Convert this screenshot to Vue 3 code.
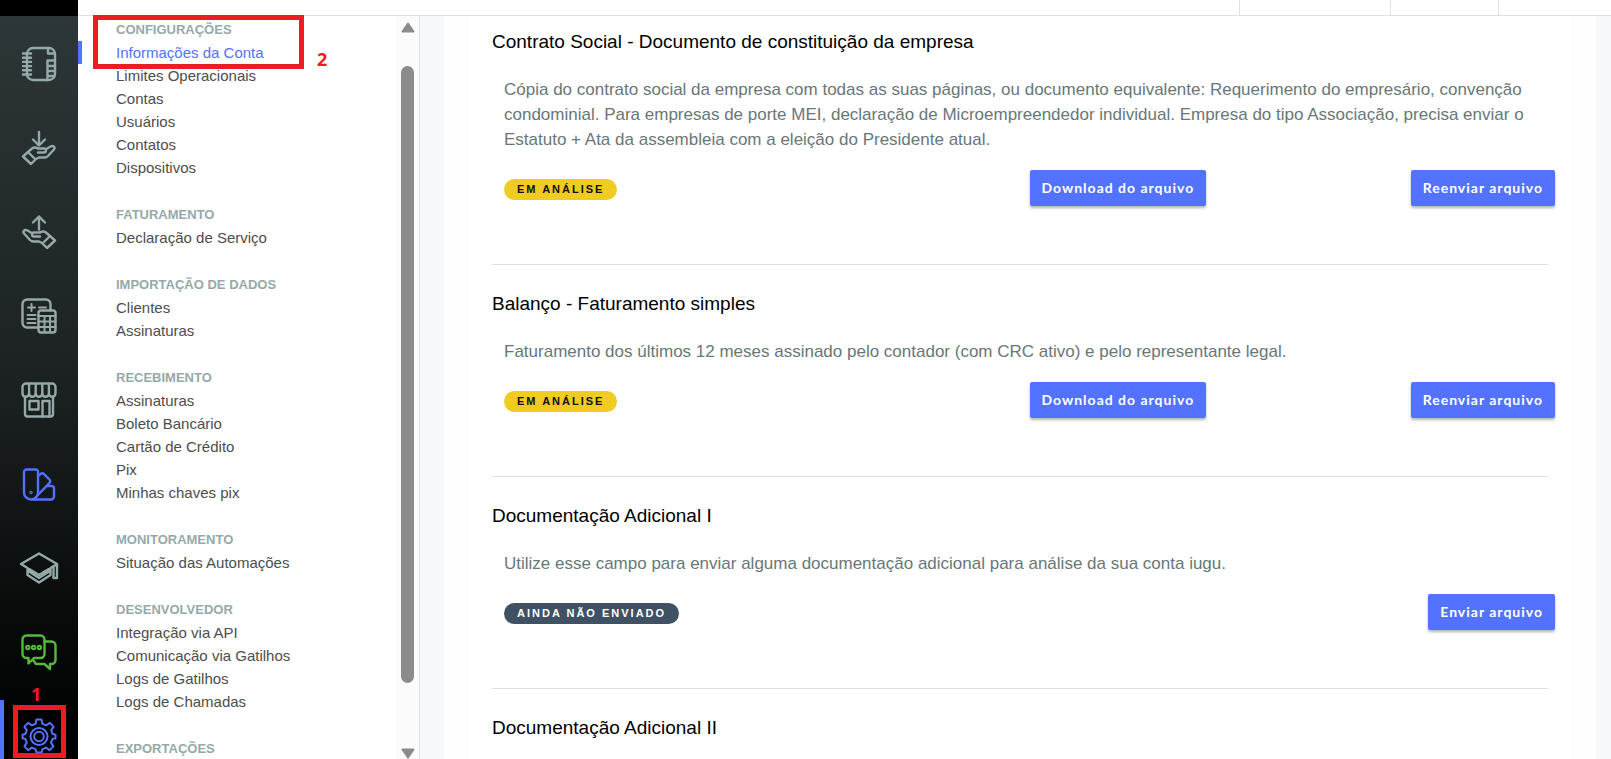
<script setup>
const groups = [
  {
    title: 'CONFIGURAÇÕES',
    items: ['Informações da Conta', 'Limites Operacionais', 'Contas', 'Usuários', 'Contatos', 'Dispositivos'],
  },
  { title: 'FATURAMENTO', items: ['Declaração de Serviço'] },
  { title: 'IMPORTAÇÃO DE DADOS', items: ['Clientes', 'Assinaturas'] },
  {
    title: 'RECEBIMENTO',
    items: ['Assinaturas', 'Boleto Bancário', 'Cartão de Crédito', 'Pix', 'Minhas chaves pix'],
  },
  { title: 'MONITORAMENTO', items: ['Situação das Automações'] },
  {
    title: 'DESENVOLVEDOR',
    items: ['Integração via API', 'Comunicação via Gatilhos', 'Logs de Gatilhos', 'Logs de Chamadas'],
  },
  { title: 'EXPORTAÇÕES', items: [] },
]

const documents = [
  {
    title: 'Contrato Social - Documento de constituição da empresa',
    text: 'Cópia do contrato social da empresa com todas as suas páginas, ou documento equivalente: Requerimento do empresário, convenção condominial. Para empresas de porte MEI, declaração de Microempreendedor individual. Empresa do tipo Associação, precisa enviar o Estatuto + Ata da assembleia com a eleição do Presidente atual.',
    status: 'EM ANÁLISE',
    tone: 'review',
    actions: ['Download do arquivo', 'Reenviar arquivo'],
  },
  {
    title: 'Balanço - Faturamento simples',
    text: 'Faturamento dos últimos 12 meses assinado pelo contador (com CRC ativo) e pelo representante legal.',
    status: 'EM ANÁLISE',
    tone: 'review',
    actions: ['Download do arquivo', 'Reenviar arquivo'],
  },
  {
    title: 'Documentação Adicional I',
    text: 'Utilize esse campo para enviar alguma documentação adicional para análise da sua conta iugu.',
    status: 'AINDA NÃO ENVIADO',
    tone: 'missing',
    actions: ['Enviar arquivo'],
  },
  { title: 'Documentação Adicional II' },
]
</script>

<template>
  <div class="app">
    <aside class="rail">
      <div class="rail-top"></div>
      <nav class="rail-nav" aria-label="Principal">
        <a href="#" class="rail-link" aria-label="Cadastros">
          <svg viewBox="0 0 36 36">
            <rect x="6" y="2" width="28" height="32" rx="6" />
            <path d="M27 2v5.500h6.500M26.500 34V14.500h7.500M26.500 20h7.500M26.500 25h7.500M26.500 30h6.500" />
            <path d="M2 7.500h8M2 11.700h8M2 15.900h8M2 20.100h8M2 24.300h8M2 28.500h8" />
          </svg>
        </a>
        <a href="#" class="rail-link" aria-label="Receber">
          <svg viewBox="0 0 36 36">
            <path d="M18 2v13M12 9.500l6 6 6-6" />
            <path d="M2 26.500l5-4.500 7.500 7.500-4.500 4.500zM7 22l4-3.500c2-1.400 4-1.300 6 0h6c2.600 0 2.600 4 0 4h-6M24.500 19.500l5-3c3-1.500 5 .7 3.400 3L27 26c-1 1-2 1.500-3.500 1.500H18l-4 2" />
          </svg>
        </a>
        <a href="#" class="rail-link" aria-label="Pagar">
          <svg viewBox="0 0 36 36">
            <path d="M18 15.500v-13M12 8.500l6-6 6 6" />
            <path d="M34 26.500l-5-4.500-7.500 7.500 4.500 4.500zM29 22l-4-3.500c-2-1.400-4-1.300-6 0h-6c-2.600 0-2.600 4 0 4h6M11.500 19.500l-5-3c-3-1.500-5 .7-3.400 3L9 26c1 1 2 1.500 3.500 1.500H18l4 2" />
          </svg>
        </a>
        <a href="#" class="rail-link" aria-label="Financeiro">
          <svg viewBox="0 0 36 36">
            <path d="M17 29.500H6a4.500 4.500 0 0 1-4.500-4.500V6A4.500 4.500 0 0 1 6 1.500h19A4.500 4.500 0 0 1 29.500 6v6" />
            <path d="M7 9.500h7M10.500 6v7M18 9.500h7M6.500 17h8M6.500 21h8M6.500 25h8" stroke-width="2" />
            <rect x="17.500" y="12.500" width="17" height="22" rx="2.500" />
            <path d="M17.500 18h17M17.500 23.500h17M17.500 29h17M23.500 18v16M29 18v16" stroke-width="2" />
          </svg>
        </a>
        <a href="#" class="rail-link" aria-label="Marketplace">
          <svg viewBox="0 0 36 36">
            <path d="M1.500 11V5A3.500 3.500 0 0 1 5 1.500h26A3.500 3.500 0 0 1 34.500 5v6c0 5-6.600 5-6.600 0 0 5-6.600 5-6.600 0 0 5-6.600 5-6.600 0 0 5-6.600 5-6.600 0 0 5-6.600 5-6.600 0zM8.100 11V2M14.700 11V2M21.300 11V2M27.900 11V2" />
            <path d="M4 15v17a2.500 2.500 0 0 0 2.500 2.500h23A2.500 2.500 0 0 0 32 32V15" />
            <rect x="8.500" y="19" width="9" height="8.500" />
            <path d="M21.500 34.500V19H28.500v15.500" />
          </svg>
        </a>
        <a href="#" class="rail-link blue" aria-label="Personalização">
          <svg viewBox="0 0 36 36">
            <path d="M3 6a2.500 2.500 0 0 1 2.500-2.500h9A2.500 2.500 0 0 1 17 6v20.500a7 7 0 0 1-14 0zM17 10.500l2.500-2.500c1.200-1 2.500-1 3.500.2l5.500 5.500c1 1.200 1 2.500-.2 3.500L14.500 31.500M27 20h3.500a2.500 2.500 0 0 1 2.500 2.500v8a3 3 0 0 1-3 3H10" />
            <circle class="solid" cx="10" cy="26.500" r="0.500" />
          </svg>
        </a>
        <a href="#" class="rail-link" aria-label="Academia">
          <svg class="wide" viewBox="0 0 40 36">
            <path d="M2 14L20 3.500 38 14 20 25zM38 14v14h-3.500V16.500M31.500 18v7L20 32.500 8.500 25v-7M8.500 20.500L20 28l11.500-7.500" />
          </svg>
        </a>
        <a href="#" class="rail-link green" aria-label="Atendimento">
          <svg viewBox="0 0 36 36">
            <path d="M5.500 1.500h14A4 4 0 0 1 23.500 5.500V20a4 4 0 0 1-4 4H13l-5.500 5.500V24h-2a4 4 0 0 1-4-4V5.500a4 4 0 0 1 4-4z" />
            <path d="M23.500 7.500h7a4 4 0 0 1 4 4V26a4 4 0 0 1-4 4h-1.500v5l-5.500-5H15l-3-4" />
            <g stroke-width="2"><circle cx="6.800" cy="13.500" r="1.700" /><circle cx="12.600" cy="13.500" r="1.700" /><circle cx="18.400" cy="13.500" r="1.700" /></g>
          </svg>
        </a>
        <a href="#" class="rail-link blue current" aria-label="Configurações">
          <svg viewBox="0 0 36 36">
            <path d="M15.500 1.500h5l1 4.300 3.600 1.500 3.800-2.400 3.700 3.700-2.400 3.800 1.500 3.600 2.800.7v3.600l-3 .7-1.500 3.600 2.400 3.800-3.700 3.700-3.800-2.400-3.400 1.500-1 3.300h-5l-1-3.300-3.600-1.500-3.800 2.400-3.700-3.700 2.400-3.800-1.500-3.600-2.800-.7v-3.600l2.800-.7 1.500-3.600-2.400-3.800 3.700-3.700 3.800 2.400 3.600-1.500z" />
            <circle cx="18" cy="18.500" r="8.500" /><circle cx="18" cy="18.500" r="4.800" />
          </svg>
        </a>
      </nav>
      <span class="frame frame-gear"></span>
      <span class="note note-one">1</span>
    </aside>

    <div class="workspace">
      <header class="topbar">
        <div class="top-cell cell-a"></div>
        <div class="top-cell cell-b"></div>
        <div class="top-cell cell-c"></div>
      </header>

      <div class="body">
        <nav class="menu" aria-label="Configurações">
          <div class="menu-list">
            <section v-for="(group, g) in groups" :key="group.title" class="group">
              <h2>{{ group.title }}</h2>
              <a
                v-for="(item, i) in group.items"
                :key="item"
                href="#"
                :class="{ active: g === 0 && i === 0 }"
              >{{ item }}</a>
            </section>
          </div>
          <div class="scrollbar" aria-hidden="true">
            <svg viewBox="0 0 14 11"><path d="M7 1.500L12.500 9.500h-11z" /></svg>
            <div class="track"><div class="thumb"></div></div>
            <svg viewBox="0 0 14 11"><path d="M7 9.500L12.500 1.500h-11z" /></svg>
          </div>
        </nav>

        <main class="content">
          <div class="panel">
            <div class="card">
              <section v-for="doc in documents" :key="doc.title" class="document">
                <h3>{{ doc.title }}</h3>
                <template v-if="doc.text">
                  <p>{{ doc.text }}</p>
                  <div class="row">
                    <div class="status"><span class="badge" :class="doc.tone">{{ doc.status }}</span></div>
                    <div class="actions">
                      <button v-for="action in doc.actions" :key="action" type="button">{{ action }}</button>
                    </div>
                  </div>
                </template>
              </section>
            </div>
          </div>
        </main>
      </div>
      <span class="frame frame-account"></span>
      <span class="note note-two">2</span>
    </div>
  </div>
</template>

<style>
body {
  margin: 0;
}
</style>

<style scoped>
.app {
  display: flex;
  height: 100vh;
  overflow: hidden;
  background: #fff;
  font-family: "Liberation Sans", Arial, sans-serif;
}
.app * {
  box-sizing: border-box;
}

/* Icon rail */
.rail {
  position: relative;
  flex: none;
  display: flex;
  flex-direction: column;
  width: 78px;
  overflow: hidden;
  background: #000;
}
.rail-top {
  flex: none;
  height: 16px;
}
.rail-nav {
  flex: 1;
  padding-top: 6px;
  background: linear-gradient(#2d3638, #1d2323 45%, #000 95%);
}
.rail-link {
  position: relative;
  display: flex;
  align-items: center;
  justify-content: center;
  height: 84px;
  color: #95a9a9;
}
.rail-link.blue {
  color: #5272ff;
}
.rail-link.green {
  color: #55b83f;
}
.rail-link.current::before {
  content: "";
  position: absolute;
  left: 0;
  top: 6px;
  bottom: 0;
  width: 4px;
  background: #5272ff;
}
.rail-link svg {
  width: 36px;
  height: 36px;
  fill: none;
  stroke: currentColor;
  stroke-width: 2.4;
  stroke-linejoin: round;
  stroke-linecap: round;
}
.rail-link svg.wide {
  width: 40px;
}
.rail-link.current svg {
  stroke-width: 2;
}
.rail-link .solid {
  fill: currentColor;
}

/* Annotations */
.frame {
  position: absolute;
  border: 5px solid #ed1c24;
}
.frame-gear {
  left: 13px;
  top: 705px;
  width: 53px;
  height: 53px;
}
.frame-account {
  left: 15px;
  top: 15px;
  width: 211px;
  height: 54px;
}
.note {
  position: absolute;
  color: #ed1c24;
  font: bold 18px/20px "Open Sans", sans-serif;
}
.note-one {
  left: 31px;
  top: 684px;
}
.note-two {
  left: 239px;
  top: 49px;
}

.workspace {
  position: relative;
  flex: 1;
  display: flex;
  flex-direction: column;
  min-width: 0;
}
.topbar {
  flex: none;
  display: flex;
  justify-content: flex-end;
  height: 16px;
  border-bottom: 1px solid #e1e1e1;
}
.top-cell {
  border-left: 1px solid #e1e1e1;
}
.cell-a {
  width: 151px;
}
.cell-b {
  width: 108px;
}
.cell-c {
  width: 113px;
}
.body {
  flex: 1;
  display: flex;
  min-height: 0;
}

/* Settings menu */
.menu {
  flex: none;
  display: flex;
  width: 342px;
  border-right: 1px solid #e1e1e1;
}
.menu-list {
  flex: 1;
  padding-top: 3px;
  overflow: hidden;
}
.group {
  margin-bottom: 25px;
}
.group h2 {
  margin: 0;
  padding-left: 38px;
  color: #95a9a9;
  font-size: 13px;
  font-weight: bold;
  line-height: 22px;
}
.group a {
  display: block;
  padding-left: 38px;
  color: #4d4d4d;
  font-size: 15px;
  line-height: 23px;
  text-decoration: none;
}
.group a.active {
  color: #5272ff;
  box-shadow: inset 4px 0 #5272ff;
}
.scrollbar {
  flex: none;
  display: flex;
  flex-direction: column;
  align-items: center;
  width: 23px;
  padding-top: 6px;
  background: #fbfbfb;
}
.scrollbar svg {
  flex: none;
  width: 14px;
  height: 11px;
  fill: #8b8b8b;
  stroke: #8b8b8b;
  stroke-width: 2;
  stroke-linejoin: round;
}
.track {
  flex: 1;
  width: 13px;
  padding: 33px 0 65px;
}
.thumb {
  height: 100%;
  border-radius: 7px;
  background: #8b8b8b;
}

/* Documents */
.content {
  flex: 1;
  min-width: 0;
  padding: 0 15px 0 24px;
  overflow: hidden;
  background: #f7f8fa;
}
.panel {
  min-height: 100%;
  padding: 0 24px;
  background: #fefefe;
}
.card {
  min-height: 100%;
  padding: 0 24px;
  background: #fff;
  box-shadow: 0 0 2px rgba(0, 0, 0, 0.06);
}
.document {
  padding: 27px 0 58px;
  border-bottom: 1px solid #e1e1e1;
}
.document:first-child {
  padding-top: 14px;
}
.document h3 {
  margin: 0;
  color: #000;
  font-size: 19px;
  font-weight: normal;
  line-height: 24px;
}
.document p {
  margin: 23px 12px 18px;
  color: #687777;
  font-size: 17px;
  line-height: 25px;
}
.row {
  display: grid;
  grid-template-columns: 1fr 1fr;
  align-items: center;
  margin: 0 -7px 0 12px;
}
.status {
  display: flex;
  padding-top: 3px;
}
.badge {
  padding: 0 13px;
  border-radius: 11px;
  font-size: 11px;
  font-weight: bold;
  line-height: 21px;
  letter-spacing: 2px;
}
.badge.review {
  background: #f0cb22;
  color: #111;
}
.badge.missing {
  background: #3f5163;
  color: #fff;
}
.actions {
  display: flex;
  justify-content: space-between;
}
button {
  height: 36px;
  padding: 0 12px;
  border: 0;
  border-radius: 2px;
  background: #5272ff;
  color: #fff;
  font: bold 14px/20px Lato, sans-serif;
  letter-spacing: 1px;
  box-shadow: 0 2px 3px rgba(0, 0, 0, 0.3);
}
button:only-child {
  margin-left: auto;
}
</style>
